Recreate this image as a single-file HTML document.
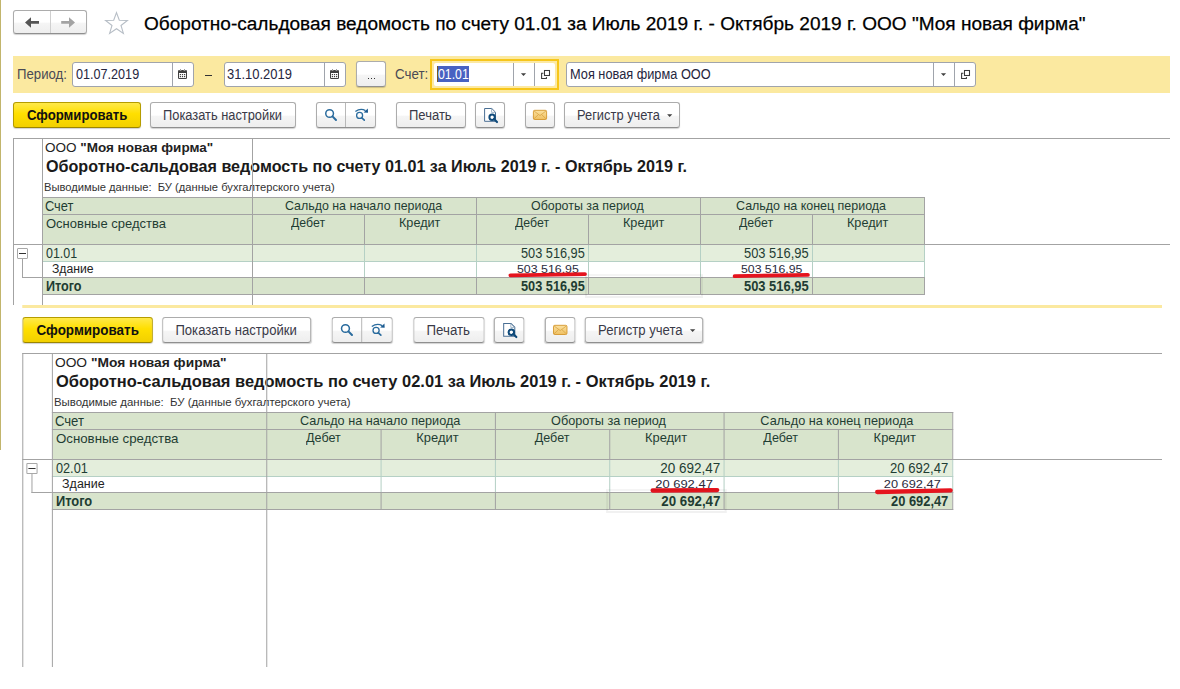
<!DOCTYPE html>
<html><head><meta charset="utf-8"><title>ОСВ</title><style>
html,body{margin:0;padding:0;background:#fff;}
body{width:1180px;height:689px;position:relative;overflow:hidden;font-family:"Liberation Sans", sans-serif;}
.r,.t,.btn,.inp{position:absolute;}
.t{white-space:pre;line-height:1;}
.btn{box-sizing:border-box;border:1px solid #acacac;border-bottom-color:#8f8f8f;border-radius:3px;background:linear-gradient(#ffffff,#ffffff 50%,#f5f5f5 56%,#eeeeee);box-shadow:0 1px 1px rgba(0,0,0,0.18);}
.ybtn{border-color:#b59c00;border-bottom-color:#9c8600;background:linear-gradient(#ffe94a,#ffdf00 45%,#f2d000);}
.inp{box-sizing:border-box;border:1px solid #a0a4ac;border-radius:3px;background:#fff;}
.clipTop{position:absolute;left:0;top:0;width:1180px;height:305px;overflow:hidden;}
.clipBot{position:absolute;left:0;top:305px;width:1162px;height:384px;overflow:hidden;}
.win{position:absolute;left:0;top:0;width:1180px;height:800px;}
.winB{position:absolute;left:8.75px;top:-90px;width:1180px;height:452px;overflow:hidden;transform:scaleX(1.0208);transform-origin:0 0;}
</style></head>
<body>
<div class="r" style="left:0;top:0;width:1px;height:450px;background:#c2b56c"></div>
<div class="clipTop"><div class="win">
<div class="btn" style="left:13px;top:10px;width:74px;height:24px"></div>
<div class="r" style="left:50px;top:11px;width:1px;height:22px;background:#cfcfcf;"></div>
<svg class="r" style="left:20px;top:14px" width="24" height="18" viewBox="20 14 24 18"><path d="M25 22.4 L31 17.2 L31 21.1 L39 21.1 L39 23.7 L31 23.7 L31 27.7 Z" fill="#555"/></svg>
<svg class="r" style="left:58px;top:14px" width="24" height="18" viewBox="58 14 24 18"><path d="M75 22.4 L69 17.2 L69 21.1 L61.2 21.1 L61.2 23.7 L69 23.7 L69 27.7 Z" fill="#a3a3a3"/></svg>
<svg class="r" style="left:102px;top:9px" width="30" height="28" viewBox="102 9 30 28"><path d="M116.5 12.6 L119.3 20.3 L127.4 20.5 L121 25.5 L123.4 33.4 L116.5 28.7 L109.6 33.4 L112 25.5 L105.6 20.5 L113.7 20.3 Z" fill="none" stroke="#b7bec6" stroke-width="1.1"/></svg>
<div class="t" style="left:144.01px;top:14.00px;font-size:19.2px;font-weight:normal;color:#000;transform:scaleX(0.9926);transform-origin:0 0;-webkit-text-stroke:0.25px #000;">Оборотно-сальдовая ведомость по счету 01.01 за Июль 2019 г. - Октябрь 2019 г. ООО "Моя новая фирма"</div>
<div class="r" style="left:13px;top:56px;width:1157px;height:37px;background:#fbe9a0;"></div>
<div class="t" style="left:17.34px;top:68.00px;font-size:13.8px;font-weight:normal;color:#4a4a55;transform:scaleX(0.9560);transform-origin:0 0;">Период:</div>
<div class="inp" style="left:72px;top:62px;width:122px;height:25px"></div>
<div class="r" style="left:172px;top:63px;width:1px;height:23px;background:#a0a4ac;"></div>
<svg class="r" style="left:177.8px;top:69px" width="9" height="10" viewBox="0 0 9 10"><rect x="0" y="1" width="9" height="9" rx="1.2" fill="#404040"/><rect x="1" y="4" width="7" height="5" fill="#fff"/><rect x="1.8" y="0" width="1.4" height="2" fill="#fff"/><rect x="5.8" y="0" width="1.4" height="2" fill="#fff"/><rect x="2" y="0.3" width="1" height="1.4" fill="#777"/><rect x="6" y="0.3" width="1" height="1.4" fill="#777"/><g fill="#404040"><rect x="1.8" y="5" width="1.2" height="1.2"/><rect x="3.9" y="5" width="1.2" height="1.2"/><rect x="6" y="5" width="1.2" height="1.2"/><rect x="1.8" y="7" width="1.2" height="1.2"/><rect x="3.9" y="7" width="1.2" height="1.2"/><rect x="6" y="7" width="1.2" height="1.2"/></g></svg>
<div class="t" style="left:76.40px;top:68.00px;font-size:13.8px;font-weight:normal;color:#262640;transform:scaleX(0.9145);transform-origin:0 0;">01.07.2019</div>
<div class="inp" style="left:224px;top:62px;width:122px;height:25px"></div>
<div class="r" style="left:324px;top:63px;width:1px;height:23px;background:#a0a4ac;"></div>
<svg class="r" style="left:329.8px;top:69px" width="9" height="10" viewBox="0 0 9 10"><rect x="0" y="1" width="9" height="9" rx="1.2" fill="#404040"/><rect x="1" y="4" width="7" height="5" fill="#fff"/><rect x="1.8" y="0" width="1.4" height="2" fill="#fff"/><rect x="5.8" y="0" width="1.4" height="2" fill="#fff"/><rect x="2" y="0.3" width="1" height="1.4" fill="#777"/><rect x="6" y="0.3" width="1" height="1.4" fill="#777"/><g fill="#404040"><rect x="1.8" y="5" width="1.2" height="1.2"/><rect x="3.9" y="5" width="1.2" height="1.2"/><rect x="6" y="5" width="1.2" height="1.2"/><rect x="1.8" y="7" width="1.2" height="1.2"/><rect x="3.9" y="7" width="1.2" height="1.2"/><rect x="6" y="7" width="1.2" height="1.2"/></g></svg>
<div class="t" style="left:227.16px;top:68.00px;font-size:13.8px;font-weight:normal;color:#262640;transform:scaleX(0.9397);transform-origin:0 0;">31.10.2019</div>
<div class="r" style="left:205px;top:75px;width:7px;height:1px;background:#333;"></div>
<div class="btn" style="left:356px;top:61px;width:30px;height:26px"><div class="r" style="left:10.5px;top:15.6px;width:1.3px;height:1.3px;background:#333"></div><div class="r" style="left:13.5px;top:15.6px;width:1.3px;height:1.3px;background:#333"></div><div class="r" style="left:16.5px;top:15.6px;width:1.3px;height:1.3px;background:#333"></div></div>
<div class="t" style="left:395.43px;top:68.00px;font-size:13.8px;font-weight:normal;color:#4a4a55;transform:scaleX(0.9656);transform-origin:0 0;">Счет:</div>
<div class="r" style="left:430px;top:59px;width:125px;height:27px;border:2px solid #f7c61a;border-radius:0;background:#fce9a4"></div>
<div class="r" style="left:434px;top:63px;width:121px;height:23px;background:#fff;border-radius:2px"></div>
<div class="r" style="left:513px;top:63px;width:1px;height:23px;background:#a0a4ac;"></div>
<div class="r" style="left:534px;top:63px;width:1px;height:23px;background:#a0a4ac;"></div>
<div class="r" style="left:437px;top:66px;width:32px;height:16px;background:#4862c2;"></div>
<div class="r" style="left:437px;top:66px;width:1px;height:16px;background:#7a5a20;"></div>
<div class="t" style="left:438.00px;top:68.00px;font-size:13.8px;font-weight:normal;color:#fff;transform:scaleX(0.8912);transform-origin:0 0;">01.01</div>
<div class="inp" style="left:566px;top:62px;width:410px;height:25px"></div>
<div class="r" style="left:933px;top:63px;width:1px;height:23px;background:#a0a4ac;"></div>
<div class="r" style="left:954px;top:63px;width:1px;height:23px;background:#a0a4ac;"></div>
<div class="t" style="left:569.57px;top:68.00px;font-size:13.8px;font-weight:normal;color:#262640;transform:scaleX(0.9258);transform-origin:0 0;">Моя новая фирма ООО</div>
<svg class="r" style="left:519px;top:71px" width="8" height="6" viewBox="519 71 8 6"><path d="M520.9 73.3 L526.1 73.3 L523.5 76.0 Z" fill="#404040"/></svg>
<svg class="r" style="left:939px;top:71px" width="8" height="6" viewBox="939 71 8 6"><path d="M940.9 73.3 L946.1 73.3 L943.5 76.0 Z" fill="#404040"/></svg>
<svg class="r" style="left:538px;top:67px" width="16" height="16" viewBox="538 67 16 16"><rect x="544.5" y="70.5" width="5" height="5" fill="none" stroke="#3a3a3a" stroke-width="1.05"/><path d="M543.4 73.3 H541.6 V78.4 H546.4 V76.9" fill="none" stroke="#3a3a3a" stroke-width="1.05"/></svg>
<svg class="r" style="left:958px;top:67px" width="16" height="16" viewBox="958 67 16 16"><rect x="964.5" y="70.5" width="5" height="5" fill="none" stroke="#3a3a3a" stroke-width="1.05"/><path d="M963.4 73.3 H961.6 V78.4 H966.4 V76.9" fill="none" stroke="#3a3a3a" stroke-width="1.05"/></svg>
<div class="btn ybtn" style="left:13px;top:102px;width:128px;height:26px"></div>
<div class="t" style="left:26.65px;top:109.00px;font-size:13.8px;font-weight:bold;color:#111;transform:scaleX(0.9538);transform-origin:0 0;">Сформировать</div>
<div class="btn" style="left:150px;top:102px;width:146px;height:26px"></div>
<div class="t" style="left:163.27px;top:109.00px;font-size:13.8px;font-weight:normal;color:#3a3a48;transform:scaleX(0.9310);transform-origin:0 0;">Показать настройки</div>
<div class="btn" style="left:316px;top:102px;width:60px;height:26px"></div>
<div class="r" style="left:345px;top:103px;width:1px;height:24px;background:#b8b8b8;"></div>
<svg class="r" style="left:320px;top:104px" width="20" height="20" viewBox="320 104 20 20"><circle cx="329.6" cy="113.5" r="3.85" fill="none" stroke="#2b6c9e" stroke-width="1.5"/><path d="M332.5 116.4 L336 120" stroke="#2b6c9e" stroke-width="2" stroke-linecap="round"/></svg>
<svg class="r" style="left:350px;top:104px" width="22" height="20" viewBox="350 104 22 20"><circle cx="359.6" cy="115.4" r="3" fill="none" stroke="#2b6c9e" stroke-width="1.3"/><path d="M361.8 117.8 L364.3 120.2" stroke="#2b6c9e" stroke-width="1.6" stroke-linecap="round"/><path d="M355.4 111.6 Q360.5 107.6 365.5 110.6" fill="none" stroke="#2b6c9e" stroke-width="1.3"/><path d="M363.6 112.6 L368 112.8 L367.8 108.6 Z" fill="#1a5a90"/></svg>
<div class="btn" style="left:396px;top:102px;width:70px;height:26px"></div>
<div class="t" style="left:409.36px;top:109.00px;font-size:13.8px;font-weight:normal;color:#3a3a48;transform:scaleX(0.9432);transform-origin:0 0;">Печать</div>
<div class="btn" style="left:475px;top:102px;width:30px;height:26px"></div>
<svg class="r" style="left:480px;top:105px" width="22" height="22" viewBox="480 105 22 22"><path d="M484.6 108.5 H491.8 L495.5 112.2 V121.3 H484.6 Z" fill="#fff" stroke="#4a6f94" stroke-width="1"/><path d="M491.6 108.5 V112.4 H495.5" fill="none" stroke="#8aa4bc" stroke-width="0.8"/><circle cx="492.1" cy="117.2" r="2.7" fill="#fff" stroke="#0f4a7a" stroke-width="2"/><path d="M494 119.1 L497 122.1" stroke="#0f4a7a" stroke-width="2.1" stroke-linecap="round"/></svg>
<div class="btn" style="left:525px;top:102px;width:30px;height:26px"></div>
<svg class="r" style="left:530px;top:106px" width="20" height="16" viewBox="530 106 20 16"><defs><linearGradient id="mgt" x1="0" y1="0" x2="0" y2="1"><stop offset="0" stop-color="#fbe1a0"/><stop offset="1" stop-color="#efc061"/></linearGradient></defs><rect x="533.4" y="110.3" width="13.2" height="9.2" rx="1.3" fill="url(#mgt)" stroke="#d4962e" stroke-width="0.9"/><path d="M533.8 110.8 L540 115.6 L546.2 110.8 M533.8 119 L538.5 114.5 M546.2 119 L541.5 114.5" fill="none" stroke="#d9a445" stroke-width="0.8"/></svg>
<div class="btn" style="left:564px;top:102px;width:116px;height:26px"></div>
<div class="t" style="left:577.27px;top:109.00px;font-size:13.8px;font-weight:normal;color:#3a3a48;transform:scaleX(0.9330);transform-origin:0 0;">Регистр учета</div>
<svg class="r" style="left:665px;top:112px" width="8" height="6" viewBox="665 112 8 6"><path d="M667.1 114.3 L672.3000000000001 114.3 L669.7 117.0 Z" fill="#404040"/></svg>
<div class="r" style="left:13px;top:138px;width:1157px;height:1px;background:#a3a3a3;"></div>
<div class="r" style="left:13px;top:244px;width:1157px;height:1px;background:#a3a3a3;"></div>
<div class="t" style="left:45.00px;top:141.00px;font-size:13.5px;font-weight:normal;color:#222;">ООО <b>"Моя новая фирма"</b></div>
<div class="t" style="left:46.02px;top:158.00px;font-size:16.5px;font-weight:bold;color:#1a1a1a;transform:scaleX(0.9771);transform-origin:0 0;">Оборотно-сальдовая ведомость по счету 01.01 за Июль 2019 г. - Октябрь 2019 г.</div>
<div class="t" style="left:43.98px;top:182.00px;font-size:11px;font-weight:normal;color:#333;transform:scaleX(1.0161);transform-origin:0 0;">Выводимые данные:&nbsp; БУ (данные бухгалтерского учета)</div>
<div class="r" style="left:43px;top:198px;width:881px;height:46px;background:#d8e4cc;"></div>
<div class="r" style="left:43px;top:245px;width:881px;height:16px;background:#e4eedc;"></div>
<div class="r" style="left:43px;top:262px;width:881px;height:15px;background:#fff;"></div>
<div class="r" style="left:43px;top:278px;width:881px;height:16px;background:#d8e4cc;"></div>
<div class="r" style="left:42px;top:197px;width:883px;height:1px;background:#a3a3a3;"></div>
<div class="r" style="left:42px;top:214px;width:883px;height:1px;background:#a3a3a3;"></div>
<div class="r" style="left:42px;top:261px;width:883px;height:1px;background:#b5d0c5;"></div>
<div class="r" style="left:42px;top:277px;width:883px;height:1px;background:#a3a3a3;"></div>
<div class="r" style="left:42px;top:294px;width:883px;height:1px;background:#a3a3a3;"></div>
<div class="r" style="left:364px;top:214px;width:1px;height:31px;background:#a3a3a3;"></div>
<div class="r" style="left:364px;top:245px;width:1px;height:32px;background:#b5d0c5;"></div>
<div class="r" style="left:364px;top:277px;width:1px;height:18px;background:#a3a3a3;"></div>
<div class="r" style="left:476px;top:197px;width:1px;height:48px;background:#a3a3a3;"></div>
<div class="r" style="left:476px;top:245px;width:1px;height:32px;background:#b5d0c5;"></div>
<div class="r" style="left:476px;top:277px;width:1px;height:18px;background:#a3a3a3;"></div>
<div class="r" style="left:588px;top:214px;width:1px;height:31px;background:#a3a3a3;"></div>
<div class="r" style="left:588px;top:245px;width:1px;height:32px;background:#b5d0c5;"></div>
<div class="r" style="left:588px;top:277px;width:1px;height:18px;background:#a3a3a3;"></div>
<div class="r" style="left:700px;top:197px;width:1px;height:48px;background:#a3a3a3;"></div>
<div class="r" style="left:700px;top:245px;width:1px;height:32px;background:#b5d0c5;"></div>
<div class="r" style="left:700px;top:277px;width:1px;height:18px;background:#a3a3a3;"></div>
<div class="r" style="left:812px;top:214px;width:1px;height:31px;background:#a3a3a3;"></div>
<div class="r" style="left:812px;top:245px;width:1px;height:32px;background:#b5d0c5;"></div>
<div class="r" style="left:812px;top:277px;width:1px;height:18px;background:#a3a3a3;"></div>
<div class="r" style="left:924px;top:197px;width:1px;height:48px;background:#a3a3a3;"></div>
<div class="r" style="left:924px;top:245px;width:1px;height:32px;background:#b5d0c5;"></div>
<div class="r" style="left:924px;top:277px;width:1px;height:18px;background:#a3a3a3;"></div>
<div class="r" style="left:13px;top:138px;width:1px;height:562px;background:#a3a3a3;"></div>
<div class="r" style="left:42px;top:138px;width:1px;height:562px;background:#a3a3a3;"></div>
<div class="r" style="left:252px;top:138px;width:1px;height:562px;background:#a3a3a3;"></div>
<div class="t" style="left:45.48px;top:199.00px;font-size:14px;font-weight:normal;color:#1f3d33;transform:scaleX(0.9167);transform-origin:0 0;">Счет</div>
<div class="t" style="left:45.54px;top:217.00px;font-size:13.5px;font-weight:normal;color:#1f3d33;transform:scaleX(0.9629);transform-origin:0 0;">Основные средства</div>
<div class="t" style="left:285.35px;top:199.00px;font-size:13px;font-weight:normal;color:#1f3d33;transform:scaleX(0.9537);transform-origin:0 0;">Сальдо на начало периода</div>
<div class="t" style="left:531.45px;top:199.00px;font-size:13px;font-weight:normal;color:#1f3d33;transform:scaleX(0.9547);transform-origin:0 0;">Обороты за период</div>
<div class="t" style="left:736.44px;top:199.00px;font-size:13px;font-weight:normal;color:#1f3d33;transform:scaleX(0.9577);transform-origin:0 0;">Сальдо на конец периода</div>
<div class="t" style="left:290.70px;top:216.00px;font-size:13px;font-weight:normal;color:#1f3d33;transform:scaleX(0.9472);transform-origin:0 0;">Дебет</div>
<div class="t" style="left:399.23px;top:216.00px;font-size:13px;font-weight:normal;color:#1f3d33;transform:scaleX(0.9732);transform-origin:0 0;">Кредит</div>
<div class="t" style="left:514.70px;top:216.00px;font-size:13px;font-weight:normal;color:#1f3d33;transform:scaleX(0.9472);transform-origin:0 0;">Дебет</div>
<div class="t" style="left:623.23px;top:216.00px;font-size:13px;font-weight:normal;color:#1f3d33;transform:scaleX(0.9732);transform-origin:0 0;">Кредит</div>
<div class="t" style="left:738.70px;top:216.00px;font-size:13px;font-weight:normal;color:#1f3d33;transform:scaleX(0.9472);transform-origin:0 0;">Дебет</div>
<div class="t" style="left:847.23px;top:216.00px;font-size:13px;font-weight:normal;color:#1f3d33;transform:scaleX(0.9732);transform-origin:0 0;">Кредит</div>
<div class="r" style="left:17px;top:248px;width:9px;height:9px;border:1px solid #a8a8a8;background:#fff;border-radius:1px"></div>
<div class="r" style="left:19px;top:253px;width:7px;height:1px;background:#333;"></div>
<div class="r" style="left:22px;top:259px;width:1px;height:19px;background:#a3a3a3;"></div>
<div class="r" style="left:22px;top:277px;width:20px;height:1px;background:#a3a3a3;"></div>
<div class="t" style="left:46.30px;top:247.00px;font-size:13.8px;font-weight:normal;color:#1f3d33;transform:scaleX(0.9029);transform-origin:0 0;">01.01</div>
<div class="t" style="left:51.58px;top:263.00px;font-size:12px;font-weight:normal;color:#222;transform:scaleX(1.0175);transform-origin:0 0;">Здание</div>
<div class="t" style="left:45.99px;top:280.00px;font-size:13.8px;font-weight:bold;color:#1f3d33;transform:scaleX(0.9132);transform-origin:0 0;">Итого</div>
<div class="t" style="left:520.88px;top:247.00px;font-size:13.8px;font-weight:normal;color:#1f3d33;transform:scaleX(0.9235);transform-origin:0 0;">503 516,95</div>
<div class="t" style="left:517.15px;top:264.00px;font-size:11.8px;font-weight:normal;color:#2b2b3c;transform:scaleX(1.0466);transform-origin:0 0;">503 516,95</div>
<div class="t" style="left:520.88px;top:280.00px;font-size:13.8px;font-weight:bold;color:#1f3d33;transform:scaleX(0.9235);transform-origin:0 0;">503 516,95</div>
<div class="t" style="left:744.46px;top:247.00px;font-size:13.8px;font-weight:normal;color:#1f3d33;transform:scaleX(0.9353);transform-origin:0 0;">503 516,95</div>
<div class="t" style="left:741.16px;top:264.00px;font-size:11.8px;font-weight:normal;color:#2b2b3c;transform:scaleX(1.0397);transform-origin:0 0;">503 516,95</div>
<div class="t" style="left:744.46px;top:280.00px;font-size:13.8px;font-weight:bold;color:#1f3d33;transform:scaleX(0.9353);transform-origin:0 0;">503 516,95</div>
<svg class="r" style="left:504px;top:269px" width="88" height="12" viewBox="504 269 88 12"><path d="M510.4 275.3 L585.0 274.1" stroke="#e5141e" stroke-width="3.8" stroke-linecap="round"/></svg>
<svg class="r" style="left:728px;top:269px" width="87" height="12" viewBox="728 269 87 12"><path d="M734.6 276.2 L807.9 274.9" stroke="#e5141e" stroke-width="3.8" stroke-linecap="round"/></svg>
<div class="r" style="left:585px;top:274px;width:114px;height:20px;border:2px solid rgba(0,0,0,0.05);border-top-color:rgba(0,0,0,0.04)"></div>
</div></div>
<div class="clipBot"><div class="winB">
<div class="r" style="left:13px;top:56px;width:1157px;height:37px;background:#fbe9a0;"></div>
<div class="btn ybtn" style="left:13px;top:102px;width:128px;height:26px"></div>
<div class="t" style="left:26.65px;top:109.00px;font-size:13.8px;font-weight:bold;color:#111;transform:scaleX(0.9538);transform-origin:0 0;">Сформировать</div>
<div class="btn" style="left:150px;top:102px;width:146px;height:26px"></div>
<div class="t" style="left:163.27px;top:109.00px;font-size:13.8px;font-weight:normal;color:#3a3a48;transform:scaleX(0.9310);transform-origin:0 0;">Показать настройки</div>
<div class="btn" style="left:316px;top:102px;width:60px;height:26px"></div>
<div class="r" style="left:345px;top:103px;width:1px;height:24px;background:#b8b8b8;"></div>
<svg class="r" style="left:320px;top:104px" width="20" height="20" viewBox="320 104 20 20"><circle cx="329.6" cy="113.5" r="3.85" fill="none" stroke="#2b6c9e" stroke-width="1.5"/><path d="M332.5 116.4 L336 120" stroke="#2b6c9e" stroke-width="2" stroke-linecap="round"/></svg>
<svg class="r" style="left:350px;top:104px" width="22" height="20" viewBox="350 104 22 20"><circle cx="359.6" cy="115.4" r="3" fill="none" stroke="#2b6c9e" stroke-width="1.3"/><path d="M361.8 117.8 L364.3 120.2" stroke="#2b6c9e" stroke-width="1.6" stroke-linecap="round"/><path d="M355.4 111.6 Q360.5 107.6 365.5 110.6" fill="none" stroke="#2b6c9e" stroke-width="1.3"/><path d="M363.6 112.6 L368 112.8 L367.8 108.6 Z" fill="#1a5a90"/></svg>
<div class="btn" style="left:396px;top:102px;width:70px;height:26px"></div>
<div class="t" style="left:409.36px;top:109.00px;font-size:13.8px;font-weight:normal;color:#3a3a48;transform:scaleX(0.9432);transform-origin:0 0;">Печать</div>
<div class="btn" style="left:475px;top:102px;width:30px;height:26px"></div>
<svg class="r" style="left:480px;top:105px" width="22" height="22" viewBox="480 105 22 22"><path d="M484.6 108.5 H491.8 L495.5 112.2 V121.3 H484.6 Z" fill="#fff" stroke="#4a6f94" stroke-width="1"/><path d="M491.6 108.5 V112.4 H495.5" fill="none" stroke="#8aa4bc" stroke-width="0.8"/><circle cx="492.1" cy="117.2" r="2.7" fill="#fff" stroke="#0f4a7a" stroke-width="2"/><path d="M494 119.1 L497 122.1" stroke="#0f4a7a" stroke-width="2.1" stroke-linecap="round"/></svg>
<div class="btn" style="left:525px;top:102px;width:30px;height:26px"></div>
<svg class="r" style="left:530px;top:106px" width="20" height="16" viewBox="530 106 20 16"><defs><linearGradient id="mgb" x1="0" y1="0" x2="0" y2="1"><stop offset="0" stop-color="#fbe1a0"/><stop offset="1" stop-color="#efc061"/></linearGradient></defs><rect x="533.4" y="110.3" width="13.2" height="9.2" rx="1.3" fill="url(#mgb)" stroke="#d4962e" stroke-width="0.9"/><path d="M533.8 110.8 L540 115.6 L546.2 110.8 M533.8 119 L538.5 114.5 M546.2 119 L541.5 114.5" fill="none" stroke="#d9a445" stroke-width="0.8"/></svg>
<div class="btn" style="left:564px;top:102px;width:116px;height:26px"></div>
<div class="t" style="left:577.27px;top:109.00px;font-size:13.8px;font-weight:normal;color:#3a3a48;transform:scaleX(0.9330);transform-origin:0 0;">Регистр учета</div>
<svg class="r" style="left:665px;top:112px" width="8" height="6" viewBox="665 112 8 6"><path d="M667.1 114.3 L672.3000000000001 114.3 L669.7 117.0 Z" fill="#404040"/></svg>
<div class="r" style="left:13px;top:138px;width:1157px;height:1px;background:#a3a3a3;"></div>
<div class="r" style="left:13px;top:244px;width:1157px;height:1px;background:#a3a3a3;"></div>
<div class="t" style="left:45.00px;top:141.00px;font-size:13.5px;font-weight:normal;color:#222;">ООО <b>"Моя новая фирма"</b></div>
<div class="t" style="left:46.02px;top:158.00px;font-size:16.5px;font-weight:bold;color:#1a1a1a;transform:scaleX(0.9771);transform-origin:0 0;">Оборотно-сальдовая ведомость по счету 02.01 за Июль 2019 г. - Октябрь 2019 г.</div>
<div class="t" style="left:43.98px;top:182.00px;font-size:11px;font-weight:normal;color:#333;transform:scaleX(1.0161);transform-origin:0 0;">Выводимые данные:&nbsp; БУ (данные бухгалтерского учета)</div>
<div class="r" style="left:43px;top:198px;width:881px;height:46px;background:#d8e4cc;"></div>
<div class="r" style="left:43px;top:245px;width:881px;height:16px;background:#e4eedc;"></div>
<div class="r" style="left:43px;top:262px;width:881px;height:15px;background:#fff;"></div>
<div class="r" style="left:43px;top:278px;width:881px;height:16px;background:#d8e4cc;"></div>
<div class="r" style="left:42px;top:197px;width:883px;height:1px;background:#a3a3a3;"></div>
<div class="r" style="left:42px;top:214px;width:883px;height:1px;background:#a3a3a3;"></div>
<div class="r" style="left:42px;top:261px;width:883px;height:1px;background:#b5d0c5;"></div>
<div class="r" style="left:42px;top:277px;width:883px;height:1px;background:#a3a3a3;"></div>
<div class="r" style="left:42px;top:294px;width:883px;height:1px;background:#a3a3a3;"></div>
<div class="r" style="left:364px;top:214px;width:1px;height:31px;background:#a3a3a3;"></div>
<div class="r" style="left:364px;top:245px;width:1px;height:32px;background:#b5d0c5;"></div>
<div class="r" style="left:364px;top:277px;width:1px;height:18px;background:#a3a3a3;"></div>
<div class="r" style="left:476px;top:197px;width:1px;height:48px;background:#a3a3a3;"></div>
<div class="r" style="left:476px;top:245px;width:1px;height:32px;background:#b5d0c5;"></div>
<div class="r" style="left:476px;top:277px;width:1px;height:18px;background:#a3a3a3;"></div>
<div class="r" style="left:588px;top:214px;width:1px;height:31px;background:#a3a3a3;"></div>
<div class="r" style="left:588px;top:245px;width:1px;height:32px;background:#b5d0c5;"></div>
<div class="r" style="left:588px;top:277px;width:1px;height:18px;background:#a3a3a3;"></div>
<div class="r" style="left:700px;top:197px;width:1px;height:48px;background:#a3a3a3;"></div>
<div class="r" style="left:700px;top:245px;width:1px;height:32px;background:#b5d0c5;"></div>
<div class="r" style="left:700px;top:277px;width:1px;height:18px;background:#a3a3a3;"></div>
<div class="r" style="left:812px;top:214px;width:1px;height:31px;background:#a3a3a3;"></div>
<div class="r" style="left:812px;top:245px;width:1px;height:32px;background:#b5d0c5;"></div>
<div class="r" style="left:812px;top:277px;width:1px;height:18px;background:#a3a3a3;"></div>
<div class="r" style="left:924px;top:197px;width:1px;height:48px;background:#a3a3a3;"></div>
<div class="r" style="left:924px;top:245px;width:1px;height:32px;background:#b5d0c5;"></div>
<div class="r" style="left:924px;top:277px;width:1px;height:18px;background:#a3a3a3;"></div>
<div class="r" style="left:13px;top:138px;width:1px;height:562px;background:#a3a3a3;"></div>
<div class="r" style="left:42px;top:138px;width:1px;height:562px;background:#a3a3a3;"></div>
<div class="r" style="left:252px;top:138px;width:1px;height:562px;background:#a3a3a3;"></div>
<div class="t" style="left:45.48px;top:199.00px;font-size:14px;font-weight:normal;color:#1f3d33;transform:scaleX(0.9167);transform-origin:0 0;">Счет</div>
<div class="t" style="left:45.54px;top:217.00px;font-size:13.5px;font-weight:normal;color:#1f3d33;transform:scaleX(0.9629);transform-origin:0 0;">Основные средства</div>
<div class="t" style="left:285.35px;top:199.00px;font-size:13px;font-weight:normal;color:#1f3d33;transform:scaleX(0.9537);transform-origin:0 0;">Сальдо на начало периода</div>
<div class="t" style="left:531.45px;top:199.00px;font-size:13px;font-weight:normal;color:#1f3d33;transform:scaleX(0.9547);transform-origin:0 0;">Обороты за период</div>
<div class="t" style="left:736.44px;top:199.00px;font-size:13px;font-weight:normal;color:#1f3d33;transform:scaleX(0.9577);transform-origin:0 0;">Сальдо на конец периода</div>
<div class="t" style="left:290.70px;top:216.00px;font-size:13px;font-weight:normal;color:#1f3d33;transform:scaleX(0.9472);transform-origin:0 0;">Дебет</div>
<div class="t" style="left:399.23px;top:216.00px;font-size:13px;font-weight:normal;color:#1f3d33;transform:scaleX(0.9732);transform-origin:0 0;">Кредит</div>
<div class="t" style="left:514.70px;top:216.00px;font-size:13px;font-weight:normal;color:#1f3d33;transform:scaleX(0.9472);transform-origin:0 0;">Дебет</div>
<div class="t" style="left:623.23px;top:216.00px;font-size:13px;font-weight:normal;color:#1f3d33;transform:scaleX(0.9732);transform-origin:0 0;">Кредит</div>
<div class="t" style="left:738.70px;top:216.00px;font-size:13px;font-weight:normal;color:#1f3d33;transform:scaleX(0.9472);transform-origin:0 0;">Дебет</div>
<div class="t" style="left:847.23px;top:216.00px;font-size:13px;font-weight:normal;color:#1f3d33;transform:scaleX(0.9732);transform-origin:0 0;">Кредит</div>
<div class="r" style="left:17px;top:248px;width:9px;height:9px;border:1px solid #a8a8a8;background:#fff;border-radius:1px"></div>
<div class="r" style="left:19px;top:253px;width:7px;height:1px;background:#333;"></div>
<div class="r" style="left:22px;top:259px;width:1px;height:19px;background:#a3a3a3;"></div>
<div class="r" style="left:22px;top:277px;width:20px;height:1px;background:#a3a3a3;"></div>
<div class="t" style="left:46.30px;top:247.00px;font-size:13.8px;font-weight:normal;color:#1f3d33;transform:scaleX(0.9029);transform-origin:0 0;">02.01</div>
<div class="t" style="left:51.58px;top:263.00px;font-size:12px;font-weight:normal;color:#222;transform:scaleX(1.0175);transform-origin:0 0;">Здание</div>
<div class="t" style="left:45.99px;top:280.00px;font-size:13.8px;font-weight:bold;color:#1f3d33;transform:scaleX(0.9132);transform-origin:0 0;">Итого</div>
<div class="t" style="left:638.14px;top:247.00px;font-size:13.8px;font-weight:normal;color:#1f3d33;transform:scaleX(0.9583);transform-origin:0 0;">20 692,47</div>
<div class="t" style="left:633.32px;top:264.00px;font-size:11.8px;font-weight:normal;color:#2b2b3c;transform:scaleX(1.0765);transform-origin:0 0;">20 692,47</div>
<div class="t" style="left:639.10px;top:280.00px;font-size:13.8px;font-weight:bold;color:#1f3d33;transform:scaleX(0.9426);transform-origin:0 0;">20 692,47</div>
<div class="t" style="left:862.77px;top:247.00px;font-size:13.8px;font-weight:normal;color:#1f3d33;transform:scaleX(0.9300);transform-origin:0 0;">20 692,47</div>
<div class="t" style="left:857.44px;top:264.00px;font-size:11.8px;font-weight:normal;color:#2b2b3c;transform:scaleX(1.0627);transform-origin:0 0;">20 692,47</div>
<div class="t" style="left:863.70px;top:280.00px;font-size:13.8px;font-weight:bold;color:#1f3d33;transform:scaleX(0.9148);transform-origin:0 0;">20 692,47</div>
<svg class="r" style="left:624px;top:270px" width="77" height="12" viewBox="624 270 77 12"><path d="M630.55 275.5 L693.75 275.1" stroke="#e5141e" stroke-width="4.3" stroke-linecap="round"/></svg>
<svg class="r" style="left:844px;top:270px" width="86" height="12" viewBox="844 270 86 12"><path d="M850.55 277.0 L922.45 275.3" stroke="#e5141e" stroke-width="4.3" stroke-linecap="round"/></svg>
<div class="r" style="left:585px;top:274px;width:114px;height:20px;border:2px solid rgba(0,0,0,0.05);border-top-color:rgba(0,0,0,0.04)"></div>
</div></div>
</body></html>
